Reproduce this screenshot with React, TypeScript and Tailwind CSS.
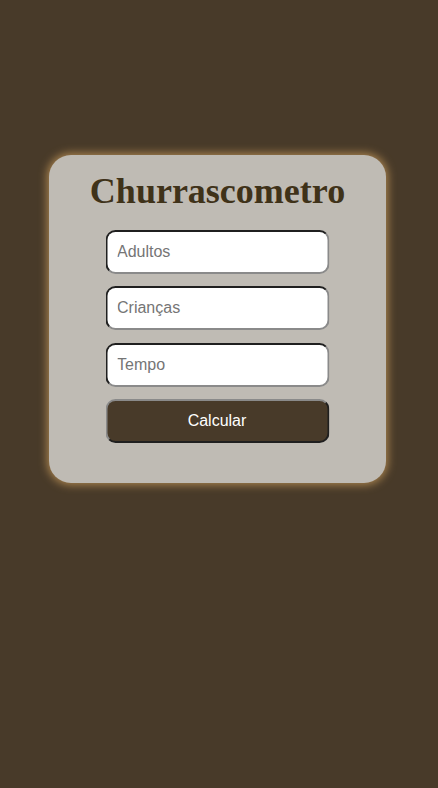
export default function App() {
  const fields = ["Adultos", "Crianças", "Tempo"];

  return (
    <div className="min-h-[788px] w-full bg-[#483a29] pt-[155px] pl-[49px] font-['Liberation_Sans',Arial,sans-serif]">
      <div className="flex w-[337px] h-[328px] flex-col items-center rounded-[22px] bg-[#bfbbb4] pt-[16px] shadow-[0_0_8px_2px_#a8834f]">
        <h1 className="font-['Liberation_Serif','Times_New_Roman',serif] text-[36px] font-bold leading-[41px] text-[#3f3219]">
          Churrascometro
        </h1>
        <form className="mt-[17.6px] flex w-[224px] -translate-x-[0.5px] flex-col gap-[12.5px]" onSubmit={(e) => e.preventDefault()}>
          {fields.map((f) => (
            <input
              key={f}
              type="number"
              placeholder={f}
              className="h-[44px] w-full rounded-[10px] border-2 border-t-[#1f1f1f] border-l-[#1f1f1f] border-r-[#8a8a8a] border-b-[#8a8a8a] bg-white pl-[10px] text-[16px] text-black outline-none placeholder:text-[#757575]"
            />
          ))}
          <button
            type="submit"
            className="h-[44px] w-full rounded-[10px] border-2 border-t-[#8a8a8a] border-l-[#8a8a8a] border-r-[#1f1f1f] border-b-[#1f1f1f] bg-[#483a29] text-[16px] text-white"
          >
            Calcular
          </button>
        </form>
      </div>
    </div>
  );
}
